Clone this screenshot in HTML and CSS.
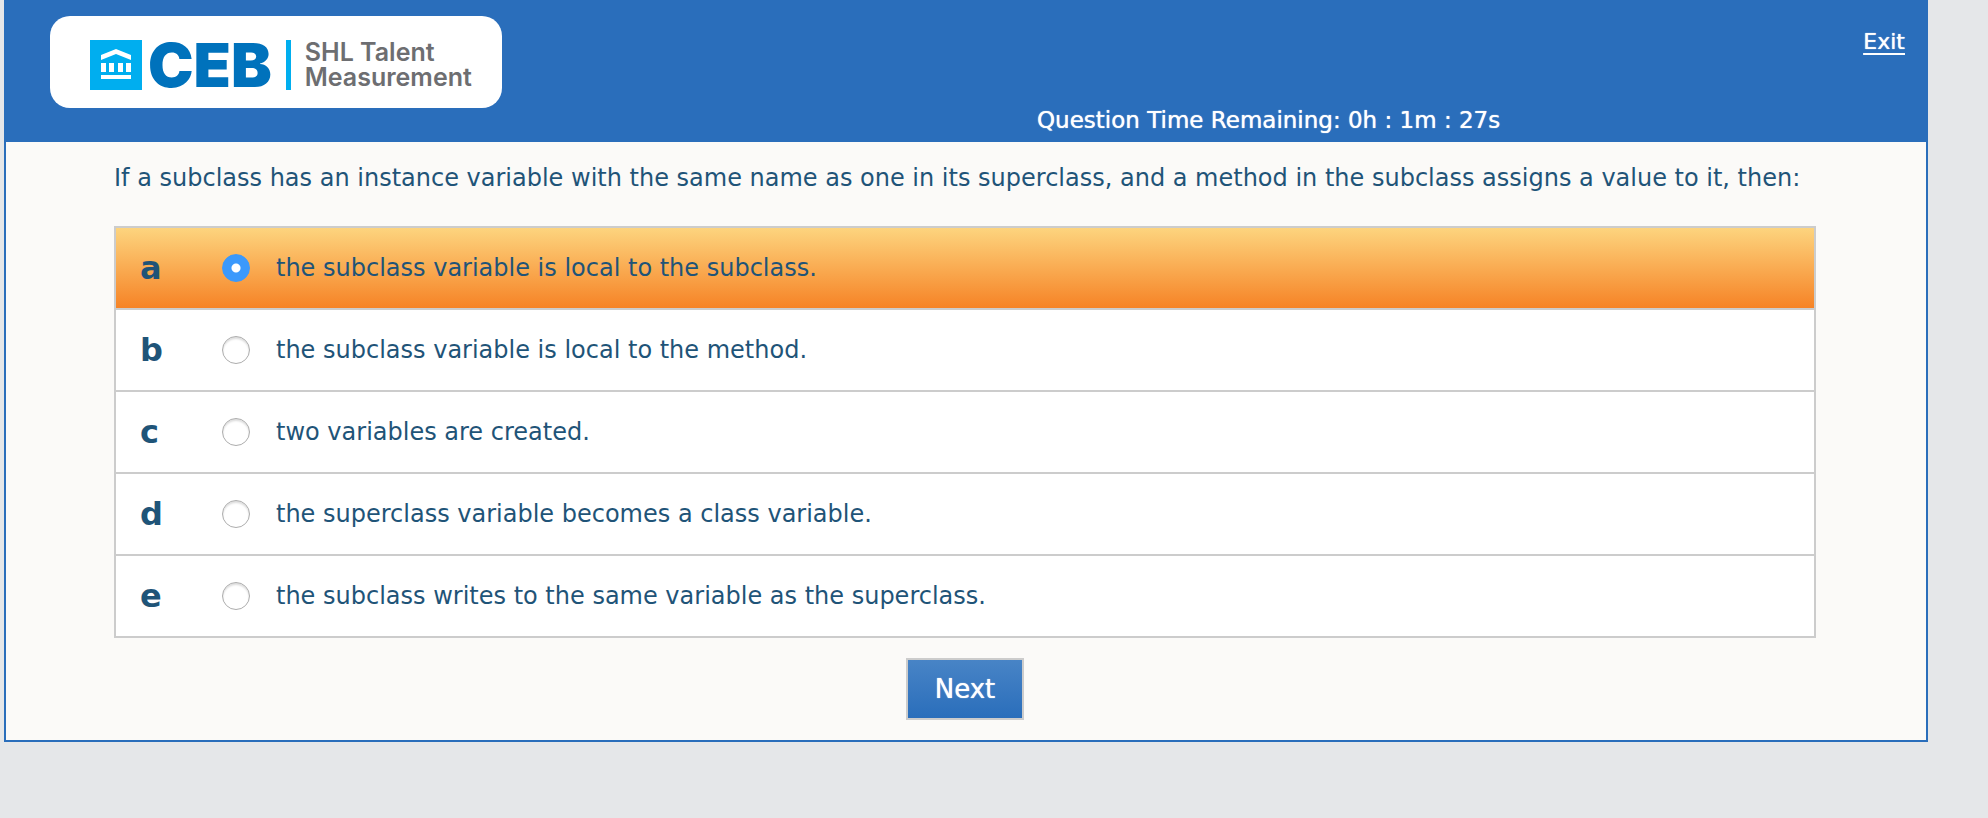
FILE: index.html
```html
<!DOCTYPE html>
<html lang="en">
<head>
<meta charset="utf-8">
<meta name="viewport" content="width=device-width, initial-scale=1">
<title>SHL Talent Measurement</title>
<link rel="stylesheet" href="styles.css">
</head>
<body>
<div class="page">
  <header class="header">
    <div class="logo">
      <svg class="logo-mark" viewBox="0 0 52 50" aria-hidden="true">
        <path fill="#00aeef" d="M0 0h52v50H0z"/>
        <path fill="#fff" d="M11 15 26 9l15 6v5L26 14 11 20zM11 23h5v9h-5zM19 23h5v9h-5zM28 23h5v9h-5zM36 23h5v9h-5zM11 35h30v4H11z"/>
      </svg>
      <span class="logo-name">CEB</span>
      <span class="logo-tag">SHL Talent<br>Measurement</span>
    </div>
    <div class="status">
      <a class="exit" href="#">Exit</a>
      <div class="timer">Question Time Remaining: 0h : 1m : 27s</div>
    </div>
  </header>
  <form class="question">
    <p class="prompt" id="prompt">If a subclass has an instance variable with the same name as one in its superclass, and a method in the subclass assigns a value to it, then:</p>
    <div class="options" role="radiogroup" aria-labelledby="prompt">
      <label class="option"><span class="letter">a</span><input class="radio" type="radio" name="answer" checked><span>the subclass variable is local to the subclass.</span></label>
      <label class="option"><span class="letter">b</span><input class="radio" type="radio" name="answer"><span>the subclass variable is local to the method.</span></label>
      <label class="option"><span class="letter">c</span><input class="radio" type="radio" name="answer"><span>two variables are created.</span></label>
      <label class="option"><span class="letter">d</span><input class="radio" type="radio" name="answer"><span>the superclass variable becomes a class variable.</span></label>
      <label class="option"><span class="letter">e</span><input class="radio" type="radio" name="answer"><span>the subclass writes to the same variable as the superclass.</span></label>
    </div>
    <button class="next" type="button">Next</button>
  </form>
</div>
</body>
</html>
```
FILE: styles.css
```css
* { box-sizing: border-box; }

body {
  margin: 0;
  padding: 0 60px 0 4px;
  background: #e5e7e9;
  color: #1f5478;
  font: 24px/32px Verdana, "DejaVu Sans", sans-serif;
}

.page {
  border: 2px solid #2a6ebb;
  border-top: 0;
  background: #fbfaf8;
}

.header {
  display: grid;
  grid-template-columns: 1031fr 889fr;
  min-height: 142px;
  background: #2a6ebb;
  color: #fff;
}

.logo {
  display: flex;
  align-items: center;
  justify-self: start;
  align-self: start;
  margin: 16px 0 0 44px;
  padding: 6px 30px 0 40px;
  height: 92px;
  border-radius: 20px;
  background: #fff;
}

.logo-mark { width: 52px; height: 50px; }

.logo-name {
  margin: 0 14px 0 6px;
  color: #0072bc;
  font: 900 61px/50px Inter, sans-serif;
}

.logo-tag {
  padding-left: 14px;
  border-left: 5px solid #00aeef;
  color: #6d6e71;
  font: 600 25px/25px Inter, sans-serif;
}

.status {
  display: flex;
  flex-direction: column;
  justify-content: space-between;
  padding: 26px 21px 6px 0;
  text-shadow: 0 0 1px #fff;
}

.exit {
  align-self: flex-end;
  color: #fff;
  font-size: 22px;
  text-underline-offset: 4px;
}

.timer { font-size: 23px; }

.question { padding: 20px 110px 20px 108px; }

.prompt { margin: 0 0 32px; }

.options {
  border: 2px solid #ccc;
  background: #fff;
}

.option {
  display: grid;
  grid-template-columns: 82px 28px 1fr;
  align-items: center;
  min-height: 80px;
  padding: 0 24px;
}

.option + .option {
  border-top: 2px solid #ccc;
  min-height: 82px;
}

.option:has(:checked) { background: linear-gradient(#fdd47e, #f68326); }

.option > :last-child { padding-left: 26px; }

.letter { font-size: 32px; font-weight: bold; }

.radio {
  appearance: none;
  width: 28px;
  height: 28px;
  margin: 0;
  border: 1px solid #adadad;
  border-radius: 50%;
  background: #fff;
  box-shadow: inset 0 2px 2px #ddd;
}

.radio:checked {
  border-color: #3b99fc;
  background: radial-gradient(circle, #fff 4px, #3b99fc 5px);
  box-shadow: none;
}

.next {
  display: block;
  margin: 20px auto 0;
  padding: 13px 27px;
  border: 2px solid #ccc;
  background: linear-gradient(#4884c6, #2a6ebb);
  color: #fff;
  font: inherit;
  font-size: 26px;
  text-shadow: 0 0 1px #fff;
}
```
